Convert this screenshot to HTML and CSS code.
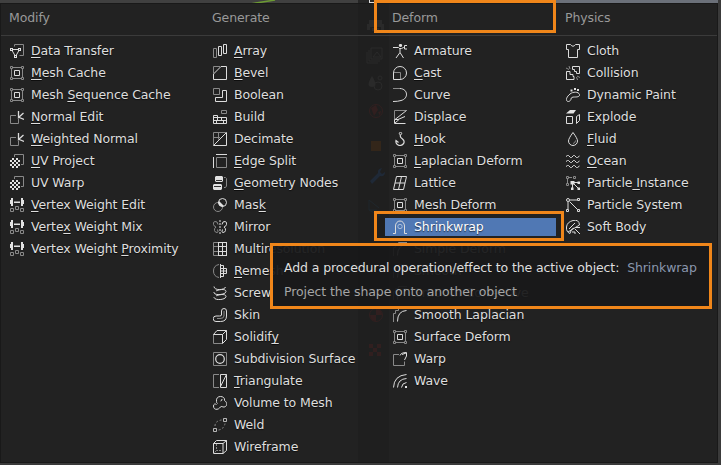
FILE: index.html
```html
<!DOCTYPE html>
<html lang="en">
<head>
<meta charset="utf-8">
<title>Add Modifier</title>
<link rel="stylesheet" href="styles.css">
</head>
<body>
<svg class="defs" aria-hidden="true">
  <symbol id="transfer" viewBox="0 0 14 14"><path class="g" d="M4.5 2.500V.5h9v11h-4"/><path d="M1.500 5.500h8L5.500 12.500z"/><path class="f" d="M0 4h3v3H0zM8 4h3v3H8zM4 11h3v3H4z"/><path class="h" d="M1 5h1v1H1zM9 5h1v1H9zM5 12h1v1H5z"/></symbol>
  <symbol id="mesh" viewBox="0 0 14 14"><path class="g" d="M3 1.500h8M3 12.500h8M1.500 3v8M12.500 3v8"/><path class="g" d="M.5.5h2v2h-2zM11.500.5h2v2h-2zM.5 11.500h2v2h-2zM11.500 11.500h2v2h-2z"/><path d="M4.500 4.500h5v5h-5z"/></symbol>
  <symbol id="normal" viewBox="0 0 14 14"><path class="g" d="M6 5.500H.5v8h8V9"/><path d="M8.500 1v6.500L13.500 3M8 7l6 2.500" stroke-width="1.300"/></symbol>
  <symbol id="uv" viewBox="0 0 14 14"><path class="g" d="M4.500 3V.5h9v10H11"/><path class="f" d="M2 4h2v2H2zM6 4h2v2H6zM0 6h2v2H0zM4 6h2v2H4zM8 6h2v2H8zM2 8h2v2H2zM6 8h2v2H6zM0 10h2v2H0zM4 10h2v2H4zM8 10h2v2H8zM2 12h2v2H2zM6 12h2v2H6z"/></symbol>
  <symbol id="weight" viewBox="0 0 14 14"><path class="f" d="M0 2h1V0h2v8H1V6H0zM14 2h-1V0h-2v8h2V6h1zM4 3.500h6V5H4z"/><path class="g" d="M.5 10.500h3v3h-3zM10.500 10.500h3v3h-3zM5.500 8.500h3v3h-3z"/></symbol>

  <symbol id="array" viewBox="0 0 14 14"><path class="g" d="M.5 4.500h3v9h-3z"/><path d="M5.500 2.500h3v9h-3zM10.500.5h3v9h-3z"/></symbol>
  <symbol id="bevel" viewBox="0 0 14 14"><path class="g" d="M.5 7V.5H7"/><path d="M.5 13.500V8L8 .5h5.500v13z"/></symbol>
  <symbol id="boolean" viewBox="0 0 14 14"><path class="g" d="M.5.5h6v6h-6z"/><path d="M9.500 2.500h4v11h-11v-4h7z"/></symbol>
  <symbol id="build" viewBox="0 0 14 14"><path class="g" d="M8.500.5h5v3h-5z"/><path d="M.5 5.500h4v2h9v6H.5zM.5 7.500h5M0 10.500h14M8.500 7.500v3M4.500 7.500v3M3.500 10.500v3M10.500 10.500v3"/></symbol>
  <symbol id="decimate" viewBox="0 0 14 14"><path class="g" d="M.5 13V.5H13M.5 5.500h6.500M5.500.5v7"/><path d="M.5 13.500L13.500.5v13z"/></symbol>
  <symbol id="edge" viewBox="0 0 14 14"><path class="g" d="M3.500 3.500h10v10h-10z"/><path d="M3 .5h11M.5 3v11"/></symbol>
  <symbol id="nodes" viewBox="0 0 14 14"><path class="f" d="M3 0h6l1 1v4l-1 1H3L2 5V1zM1 8h7l1 1v4l-1 1H1l-1-1V9z"/><path class="k" d="M3 4.500h6M1 10.500h7"/><path class="g" d="M11 1.500h1.500l1 1V10l-1 1.500H11"/></symbol>
  <symbol id="mask" viewBox="0 0 14 14"><circle class="g" cx="5" cy="9" r="4.500"/><circle cx="9.500" cy="4.500" r="4"/><path class="f" d="M5.500 4.500a4.500 4.500 0 0 1 4 4 4 4 0 0 1-4-4zM6 3l5 5-2 1-4-4z"/></symbol>
  <symbol id="mirror" viewBox="0 0 14 14"><path class="g" d="M5 4.500Q4.500 1 2 1.500T.5 4.500 3 7Q1 8.500 1.500 10.500T4 12.500 4.500 9.500"/><path d="M9 4.500Q9.500 1 12 1.500T13.500 4.500 11 7Q13 8.500 12.500 10.500T10 12.500 9.500 9.500"/><path d="M7 0v14" stroke-dasharray="2 1"/></symbol>
  <symbol id="multires" viewBox="0 0 14 14"><path class="g" d="M5 .5H.5v13H5M.5 4.500H5M.5 9.500H5"/><path d="M5.500 0v14M9.500 0v14M13.500 0v14M5 .5h9M5 4.500h9M5 9.500h9M5 13.500h9"/></symbol>
  <symbol id="remesh" viewBox="0 0 14 14"><path class="g" d="M6 .5Q.5 1.500.5 7T6 13.500"/><path d="M7.500 0v14M7.500 1.500h3v11h-3M7.500 4.500h6v5h-6M10.500 4v6M7.500 7h6"/></symbol>
  <symbol id="screw" viewBox="0 0 14 14"><path d="M1 .5C1 5 12 4 12.500 1M1 6C0 10 13 9 13 5.500S4 4 3 5M1 11c0 4 12 3 12-.5S4 9 3 10"/></symbol>
  <symbol id="skin" viewBox="0 0 14 14"><path d="M8.500 7V3a2.500 2.500 0 0 1 5 0V8q0 5.500-6 5.500H3a2.700 2.700 0 0 1 0-5.500h3.500Q8.500 8 8.500 7z"/><path class="g" d="M11 3v5q0 2.500-4 2.500H4"/></symbol>
  <symbol id="solidify" viewBox="0 0 14 14"><path class="g" d="M.5 4.500v9h9"/><path d="M.5 4.500L4 .5h9.500v9L9.500 13.500v-9h-9M9.500 4.500l4-4"/></symbol>
  <symbol id="subdiv" viewBox="0 0 14 14"><path class="g" d="M.5.5h13v13H.5z"/><circle cx="7" cy="7" r="4.300" stroke-width="1.200"/></symbol>
  <symbol id="triang" viewBox="0 0 14 14"><path class="g" d="M6 .5H.5v13H6"/><path d="M7.500.5h6v13h-6zM7.500 12.500l6-12"/></symbol>
  <symbol id="volume" viewBox="0 0 14 14"><path d="M3.500 5.500C3 2 5 .5 7.500.5S12 2 11.500 4.500C14 6 14.500 9 12.500 10.500S9 10 8 10.500 6.500 13 4 13.300.5 12 .5 10 2 7.500 3.500 8.500M3.500 5.500q0 1.500 1 2M9 3q0 2-1.500 2"/></symbol>
  <symbol id="weld" viewBox="0 0 14 14"><path d="M10.500.5h3v3h-3zM.5 10.500h3v3h-3z" opacity=".8"/><path class="g" d="M2 8Q2 3 8.500 2M5.500 12Q11 11 12 5.500" stroke-dasharray="2 2"/></symbol>
  <symbol id="wire" viewBox="0 0 14 14"><path d="M.5 3.500h9.500v10H.5zM.5 3.500l3-3h10v10l-3.500 3M10 3.500l3.500-3"/><path class="g" d="M3.500 4v6.500h6M3.500 10.500l-3 3" stroke-dasharray="2 1"/></symbol>

  <symbol id="armature" viewBox="0 0 14 14"><circle class="f" cx="7.500" cy="1.500" r="1.600"/><path d="M0 3.500h5.500l1 1h2l2-1h1.500M7 4v4.500L3 14M7 8.500L10.500 14M14 1.500h-2.500v3.500H14"/></symbol>
  <symbol id="cast" viewBox="0 0 14 14"><path d="M.5 13.500V7A6.500 6.500 0 1 1 7 13.500z"/><path class="g" d="M1 6.500h6.500V13"/></symbol>
  <symbol id="curve" viewBox="0 0 14 14"><path class="g" d="M0 .5h7"/><path d="M7 .5C15.500 1 15.500 11 8 12.500Q5 13.500 0 13.500"/></symbol>
  <symbol id="displace" viewBox="0 0 14 14"><path class="g" d="M1.500 10V.5h12"/><path d="M13.500.5L2 9.500h3L12 6.500M1.500 9.500v4h11M2 13l4-3.500"/></symbol>
  <symbol id="hook" viewBox="0 0 14 14"><circle cx="7.500" cy="1.500" r="1.200"/><path d="M7.500 3Q6.500 5 9.500 7C13 10 10 13.500 7 13.500S2.500 11 3 8.500l2.500 2" stroke-width="1.200"/></symbol>
  <symbol id="lattice" viewBox="0 0 14 14"><path d="M3.500.5h10l-3 13H.5zM8.500.5l-3 13M2 7h10"/></symbol>
  <symbol id="shrink" viewBox="0 0 14 14"><path d="M0 13.500h2.500V6a4.500 5 0 0 1 9 0v7.500H14"/><circle class="g" cx="7" cy="6.500" r="2.200"/></symbol>
  <symbol id="smooth" viewBox="0 0 14 14"><path class="g" d="M.5 14V5.500h2v-3h3v-2H14"/><path d="M4.500 13.500Q4.500 3 13.500 2.500"/></symbol>
  <symbol id="warp" viewBox="0 0 14 14"><path class="g" d="M6 2.500H.5v11h11v-4"/><path d="M7 3.500Q8 .5 13.500.5V4L11.500 8M9 2.500L13 1"/></symbol>
  <symbol id="wave" viewBox="0 0 14 14"><path d="M.5 13.500Q1 1.500 13.500.5M4.500 13.500Q5 5 13.500 4.500M8.500 13.500Q9 9 13.500 8.500"/><path class="f" d="M12 12h2v2h-2z"/></symbol>

  <symbol id="cloth" viewBox="0 0 14 14"><path d="M.5.500H4.500Q7 4 9.500.5H13.500V5.500H11.500V13.500H2.500V5.500H.5z"/></symbol>
  <symbol id="collision" viewBox="0 0 14 14"><path d="M6.500.5h7v7h-3V5.500h-2v-2h-2zM.5 5.500H4v3h3v2h1v3H.5z"/><path class="g" d="M3 0l1 3M0 2l3 1.500M11 10l3 1.500M10.500 11l1 3"/></symbol>
  <symbol id="paint" viewBox="0 0 14 14"><path d="M13.500 6.500C12.500 3.500 7 3.500 4 6S-.5 11.500 1 13s4-.5 4-2 1.500-2 3.500-2 5.500 0 5-2.500z"/><path class="f" d="M4.500 1.500h2v2h-2zM8 0h2v2H8zM11 1h2v2h-2z"/></symbol>
  <symbol id="explode" viewBox="0 0 14 14"><path class="f" d="M4 0h6L7.500 3.500H0z"/><path d="M.5 6.500h6v7h-6zM10.500 6.500l3-2v6l-3 3z"/></symbol>
  <symbol id="fluid" viewBox="0 0 14 14"><path d="M7 .5Q2.500 6.500 2.500 9a4.500 4.500 0 0 0 9 0Q11.500 6.500 7 .5z"/><path class="g" d="M9.500 8.500Q9.500 11 7 11.500"/></symbol>
  <symbol id="ocean" viewBox="0 0 14 14"><path d="M0 2.500l1.500-1h1l2 2h1l2-2h1l2 2h1l2-1.500M0 7.500l1.500-1h1l2 2h1l2-2h1l2 2h1l2-1.500M0 12.500l1.500-1h1l2 2h1l2-2h1l2 2h1l2-1.500"/></symbol>
  <symbol id="pinstance" viewBox="0 0 14 14"><path class="g" d="M.5.5h2v2h-2zM6 1.500H3M1.500 3v4M.5 7.500h2v2h-2zM7.500.5h2v2h-2z"/><path d="M6.500 5V14M6 6.500h6M6.500 6.500l6 6"/><path class="f" d="M4.500 5h4v3.500h-4zM11.500 5.500H14V8h-2.500zM5 11.500h2.500V14H5zM11.500 11.500H14V14h-2.500z"/></symbol>
  <symbol id="psystem" viewBox="0 0 14 14"><circle cx="2" cy="2" r="1.500"/><path d="M4 2h7M2 4v7M3.500 3.500l8 8"/><path d="M11.500.5h2v2h-2zM.5 11.500h2v2h-2zM11.500 11.500h2v2h-2z"/></symbol>
  <symbol id="soft" viewBox="0 0 14 14"><path d="M4 13.500Q0 12 .5 7T7 .5 13.500 5M2 12L13.500 5M3 9L9 3M4 13.500Q5 8 8 8M9 9l5 5M6 12h3v2M10 7.500h4"/></symbol>
</svg>

<div class="backdrop">
  <span class="viewport"><svg viewBox="0 0 358 4"><path d="M250 4L275 0" stroke="#6c9a32" stroke-width="1.500"/></svg></span>
  <span class="tabs"><i></i></span>
  <span class="panel"></span>
</div>
<main class="menu">
  <svg class="ghost" viewBox="0 0 31 458" aria-hidden="true">
    <g class="gray"><path d="M11 16h13v4h2v6h-3v-3H12v3H9v-6h2zM14 24h7v3h-7z" class="solid"/><path d="M13 44h11v11H13zM11 46v11h11M9 48v11h11M15 53l4-5 4 5z"/><path d="M14 72q-7 11 0 11t0-11z" class="solid"/><circle cx="20" cy="82" r="4"/><circle cx="22" cy="74" r="2"/></g>
    <g class="red"><circle cx="18" cy="107" r="6.500"/><path class="solid" d="M13 104l5-3 2 5-4 6zM20 108l3-1-1 5z"/></g>
    <path class="amber" d="M13 137h10v10H13z"/>
    <path class="blue" d="M12 177l8-8q-1-4 4-5l-2 4 2 2 3-2q0 5-5 4l-8 8z"/>
    <g class="blue line"><path d="M11 196v10l11 6M11 196l10 8M11 206h8"/></g>
    <g class="red"><circle cx="18" cy="311" r="6.500"/><path class="solid" d="M18 305v6h6q0-6-6-6zM18 311v6q-6 0-6-6z"/><path class="solid" d="M11 340h4v4h-4zM19 340h4v4h-4zM15 344h4v4h-4zM11 348h4v4h-4zM19 348h4v4h-4z"/></g>
  </svg>
  <section class="col modify">
    <h2>Modify</h2>
    <ul>
      <li><svg><use href="#transfer"/></svg><span><u>D</u>ata Transfer</span></li>
      <li><svg><use href="#mesh"/></svg><span><u>M</u>esh Cache</span></li>
      <li><svg><use href="#mesh"/></svg><span>Mesh <u>S</u>equence Cache</span></li>
      <li><svg><use href="#normal"/></svg><span><u>N</u>ormal Edit</span></li>
      <li><svg><use href="#normal"/></svg><span><u>W</u>eighted Normal</span></li>
      <li><svg><use href="#uv"/></svg><span><u>U</u>V Project</span></li>
      <li><svg><use href="#uv"/></svg><span>UV Warp</span></li>
      <li><svg><use href="#weight"/></svg><span><u>V</u>ertex Weight Edit</span></li>
      <li><svg><use href="#weight"/></svg><span>Verte<u>x</u> Weight Mix</span></li>
      <li><svg><use href="#weight"/></svg><span>Vertex Weight <u>P</u>roximity</span></li>
    </ul>
  </section>
  <section class="col generate">
    <h2>Generate</h2>
    <ul>
      <li><svg><use href="#array"/></svg><span><u>A</u>rray</span></li>
      <li><svg><use href="#bevel"/></svg><span><u>B</u>evel</span></li>
      <li><svg><use href="#boolean"/></svg><span>Boolean</span></li>
      <li><svg><use href="#build"/></svg><span>Build</span></li>
      <li><svg><use href="#decimate"/></svg><span>Decimate</span></li>
      <li><svg><use href="#edge"/></svg><span><u>E</u>dge Split</span></li>
      <li><svg><use href="#nodes"/></svg><span><u>G</u>eometry Nodes</span></li>
      <li><svg><use href="#mask"/></svg><span>Mas<u>k</u></span></li>
      <li><svg><use href="#mirror"/></svg><span>Mirror</span></li>
      <li><svg><use href="#multires"/></svg><span>Multiresolution</span></li>
      <li><svg><use href="#remesh"/></svg><span><u>R</u>emesh</span></li>
      <li><svg><use href="#screw"/></svg><span>Screw</span></li>
      <li><svg><use href="#skin"/></svg><span>Skin</span></li>
      <li><svg><use href="#solidify"/></svg><span>Solidif<u>y</u></span></li>
      <li><svg><use href="#subdiv"/></svg><span>Subdivision Surface</span></li>
      <li><svg><use href="#triang"/></svg><span><u>T</u>riangulate</span></li>
      <li><svg><use href="#volume"/></svg><span>Volume to Mesh</span></li>
      <li><svg><use href="#weld"/></svg><span>Weld</span></li>
      <li><svg><use href="#wire"/></svg><span>Wireframe</span></li>
    </ul>
  </section>
  <section class="col deform">
    <h2>Deform</h2>
    <ul>
      <li><svg><use href="#armature"/></svg><span>Armature</span></li>
      <li><svg><use href="#cast"/></svg><span><u>C</u>ast</span></li>
      <li><svg><use href="#curve"/></svg><span>Curve</span></li>
      <li><svg><use href="#displace"/></svg><span>Displace</span></li>
      <li><svg><use href="#hook"/></svg><span><u>H</u>ook</span></li>
      <li><svg><use href="#mesh"/></svg><span><u>L</u>aplacian Deform</span></li>
      <li><svg><use href="#lattice"/></svg><span>Lattice</span></li>
      <li><svg><use href="#mesh"/></svg><span>Mesh Deform</span></li>
      <li class="active"><svg><use href="#shrink"/></svg><span>Shrinkwrap</span></li>
      <li><svg><use href="#smooth"/></svg><span>Simple Deform</span></li>
      <li><svg><use href="#smooth"/></svg><span>Smooth</span></li>
      <li><svg><use href="#smooth"/></svg><span>Smooth Corrective</span></li>
      <li><svg><use href="#smooth"/></svg><span>Smooth Laplacian</span></li>
      <li><svg><use href="#mesh"/></svg><span>Surface Deform</span></li>
      <li><svg><use href="#warp"/></svg><span>Warp</span></li>
      <li><svg><use href="#wave"/></svg><span>Wave</span></li>
    </ul>
  </section>
  <section class="col physics">
    <h2>Physics</h2>
    <ul>
      <li><svg><use href="#cloth"/></svg><span>Cloth</span></li>
      <li><svg><use href="#collision"/></svg><span>Collision</span></li>
      <li><svg><use href="#paint"/></svg><span>Dynamic Paint</span></li>
      <li><svg><use href="#explode"/></svg><span>Explode</span></li>
      <li><svg><use href="#fluid"/></svg><span><u>F</u>luid</span></li>
      <li><svg><use href="#ocean"/></svg><span><u>O</u>cean</span></li>
      <li><svg><use href="#pinstance"/></svg><span>Particle<u> I</u>nstance</span></li>
      <li><svg><use href="#psystem"/></svg><span>Particle System</span></li>
      <li><svg><use href="#soft"/></svg><span>Soft Body</span></li>
    </ul>
  </section>
</main>
<div class="mark mark-head"></div>
<div class="mark mark-item"></div>
<aside class="tooltip">
  <p>Add a procedural operation/effect to the active object: <b>Shrinkwrap</b></p>
  <p class="desc">Project the shape onto another object</p>
</aside>
</body>
</html>
```

FILE: styles.css
```css
* { box-sizing: border-box; margin: 0; padding: 0; }
body {
  width: 721px;
  height: 465px;
  overflow: hidden;
  position: relative;
  background: #3a3a3a;
  padding: 4px 4px 3px 1px;
  font: 12.5px/22px "DejaVu Sans", sans-serif;
  letter-spacing: -.1px;
  color: #dedede;
}
.defs { position: absolute; width: 0; height: 0; }
.backdrop { position: absolute; inset: 0 3px auto 0; height: 4px; display: flex; }
.viewport { width: 358px; background: #404040; }
.viewport svg { display: block; width: 358px; height: 4px; }
.tabs { width: 40px; padding-left: 11px; background: #262626; }
.tabs i { display: block; width: 14px; height: 3px; border: 1px solid #ddd; border-top: 0; }
.panel { flex: 1; background: #6b7079; }
.menu {
  position: relative;
  display: grid;
  grid-template-columns: 203px 180px 173px 1fr;
  height: 458px;
  background: linear-gradient(#1f1f1f, #1f1f1f) 357px 0 / 31px 100% no-repeat #222;
  box-shadow: 0 0 0 1px #191919;
}
.ghost { position: absolute; left: 357px; top: 0; width: 31px; height: 458px; fill: none; }
.gray { stroke: #2a2a2a; }
.gray .solid { fill: #2a2a2a; stroke: none; }
.red { stroke: #311f1f; }
.red .solid { fill: #311f1f; stroke: none; }
.amber { fill: #33261a; }
.blue { fill: #1f2937; }
.line { fill: none; stroke: #1f272c; }
.col { position: relative; }
h2 {
  height: 32px;
  padding: 3px 0 0 8px;
  border-bottom: 1px solid #3b3b3b;
  font-size: 12.5px;
  font-weight: normal;
  line-height: 22px;
  color: #999;
}
ul { list-style: none; padding: 4px 0 0; }
li { --dim: #898989; display: flex; align-items: center; gap: 7px; height: 22px; padding-left: 9px; white-space: nowrap; }
li span { text-shadow: 0 1px 1px #0009; }
li svg { width: 14px; height: 14px; flex: none; fill: none; stroke: #dcdcdc; }
.g { stroke: var(--dim); }
.f { fill: #e2e2e2; stroke: none; }
.h { fill: #333; stroke: none; }
.k { stroke: #333; }
u { text-decoration: underline 1px; text-underline-offset: 2px; text-decoration-skip-ink: none; }
.active { --dim: #a9bfdf; background: linear-gradient(#5078b4, #5078b4) 1px 2px / 171px 18px no-repeat; color: #fff; }
.mark { position: absolute; border: 3px solid #f0861a; }
.mark-head { left: 374px; top: 0; width: 182px; height: 33px; }
.mark-item { left: 374px; top: 211px; width: 190px; height: 30px; }
.tooltip {
  position: absolute;
  left: 270px;
  top: 243px;
  width: 442px;
  height: 66px;
  padding: 10px 11px;
  border: 3px solid #f0861a;
  background: #18181af0;
  line-height: 24px;
  white-space: nowrap;
}
.tooltip b { margin-left: 4px; font-weight: normal; color: #8a97ae; }
.desc { color: #a5a5a5; }
```
